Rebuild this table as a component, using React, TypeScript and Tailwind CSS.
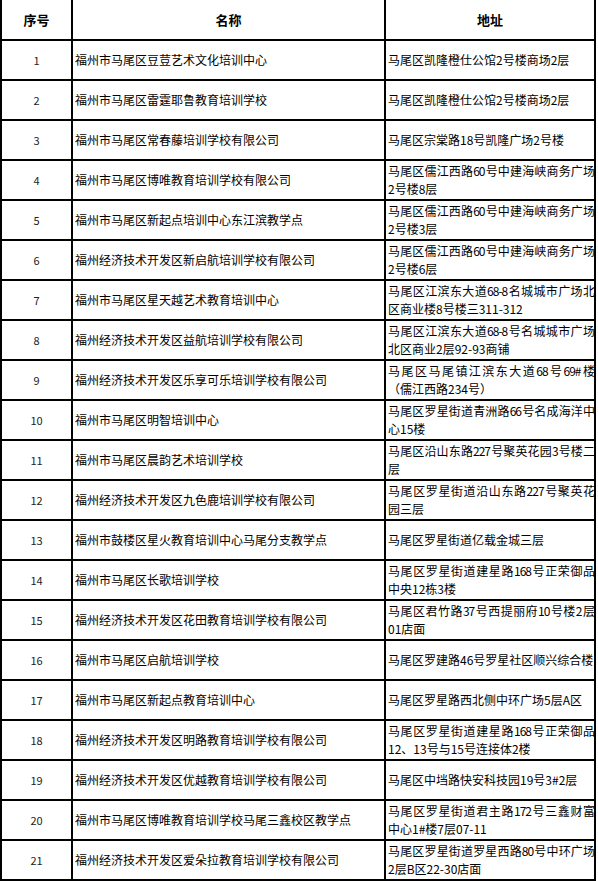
type Row = {
  no: number;
  name: string;
  addr: string[];
};

const rows: Row[] = [
  { no: 1, name: "福州市马尾区豆荳艺术文化培训中心", addr: ["马尾区凯隆橙仕公馆2号楼商场2层"] },
  { no: 2, name: "福州市马尾区雷霆耶鲁教育培训学校", addr: ["马尾区凯隆橙仕公馆2号楼商场2层"] },
  { no: 3, name: "福州市马尾区常春藤培训学校有限公司", addr: ["马尾区宗棠路18号凯隆广场2号楼"] },
  { no: 4, name: "福州市马尾区博唯教育培训学校有限公司", addr: ["马尾区儒江西路60号中建海峡商务广场", "2号楼8层"] },
  { no: 5, name: "福州市马尾区新起点培训中心东江滨教学点", addr: ["马尾区儒江西路60号中建海峡商务广场", "2号楼3层"] },
  { no: 6, name: "福州经济技术开发区新启航培训学校有限公司", addr: ["马尾区儒江西路60号中建海峡商务广场", "2号楼6层"] },
  { no: 7, name: "福州市马尾区星天越艺术教育培训中心", addr: ["马尾区江滨东大道68-8名城城市广场北", "区商业楼8号楼三311-312"] },
  { no: 8, name: "福州经济技术开发区益航培训学校有限公司", addr: ["马尾区江滨东大道68-8号名城城市广场", "北区商业2层92-93商铺"] },
  { no: 9, name: "福州经济技术开发区乐享可乐培训学校有限公司", addr: ["马尾区马尾镇江滨东大道68号69#楼", "（儒江西路234号）"] },
  { no: 10, name: "福州市马尾区明智培训中心", addr: ["马尾区罗星街道青洲路66号名成海洋中", "心15楼"] },
  { no: 11, name: "福州市马尾区晨韵艺术培训学校", addr: ["马尾区沿山东路227号聚英花园3号楼二", "层"] },
  { no: 12, name: "福州经济技术开发区九色鹿培训学校有限公司", addr: ["马尾区罗星街道沿山东路227号聚英花", "园三层"] },
  { no: 13, name: "福州市鼓楼区星火教育培训中心马尾分支教学点", addr: ["马尾区罗星街道亿载金城三层"] },
  { no: 14, name: "福州市马尾区长歌培训学校", addr: ["马尾区罗星街道建星路168号正荣御品", "中央12栋3楼"] },
  { no: 15, name: "福州经济技术开发区花田教育培训学校有限公司", addr: ["马尾区君竹路37号西提丽府10号楼2层", "01店面"] },
  { no: 16, name: "福州市马尾区启航培训学校", addr: ["马尾区罗建路46号罗星社区顺兴综合楼"] },
  { no: 17, name: "福州市马尾区新起点教育培训中心", addr: ["马尾区罗星路西北侧中环广场5层A区"] },
  { no: 18, name: "福州经济技术开发区明路教育培训学校有限公司", addr: ["马尾区罗星街道建星路168号正荣御品", "12、13号与15号连接体2楼"] },
  { no: 19, name: "福州经济技术开发区优越教育培训学校有限公司", addr: ["马尾区中垱路快安科技园19号3#2层"] },
  { no: 20, name: "福州市马尾区博唯教育培训学校马尾三鑫校区教学点", addr: ["马尾区罗星街道君主路172号三鑫财富", "中心1#楼7层07-11"] },
  { no: 21, name: "福州经济技术开发区爱朵拉教育培训学校有限公司", addr: ["马尾区罗星街道罗星西路80号中环广场", "2层B区22-30店面"] },
];

function AddressCell({ lines }: { lines: string[] }) {
  return (
    <div className="flex flex-col justify-center border-r-2 border-b-2 border-black pl-0.5 leading-[18px]">
      {lines.length > 1 ? (
        <>
          <span className="block tracking-[-1px] [text-align-last:justify] text-justify">{lines[0]}</span>
          <span className="block">{lines[1]}</span>
        </>
      ) : (
        <span className="block">{lines[0]}</span>
      )}
    </div>
  );
}

export default function App() {
  return (
    <div className="w-[598px] h-[881px] bg-white text-black text-[12px] font-['Noto_Sans_CJK_SC',sans-serif] overflow-hidden">
      <div className="w-[596px] border-l-2 border-black">
        {/* header */}
        <div className="grid grid-cols-[71px_313px_210px] h-[41px] font-bold text-[13px]">
          <div className="flex items-center justify-center border-r-2 border-b-2 border-black">序号</div>
          <div className="flex items-center justify-center border-r-2 border-b-2 border-black">名称</div>
          <div className="flex items-center justify-center border-r-2 border-b-2 border-black">地址</div>
        </div>

        {rows.map((r) => (
          <div key={r.no} className="grid grid-cols-[71px_313px_210px] h-10">
            <div className="flex items-center justify-center border-r-2 border-b-2 border-black text-[11px] text-[#222]">
              {r.no}
            </div>
            <div className="flex items-center border-r-2 border-b-2 border-black pl-0.5 whitespace-nowrap">
              {r.name}
            </div>
            <AddressCell lines={r.addr} />
          </div>
        ))}
      </div>
    </div>
  );
}
